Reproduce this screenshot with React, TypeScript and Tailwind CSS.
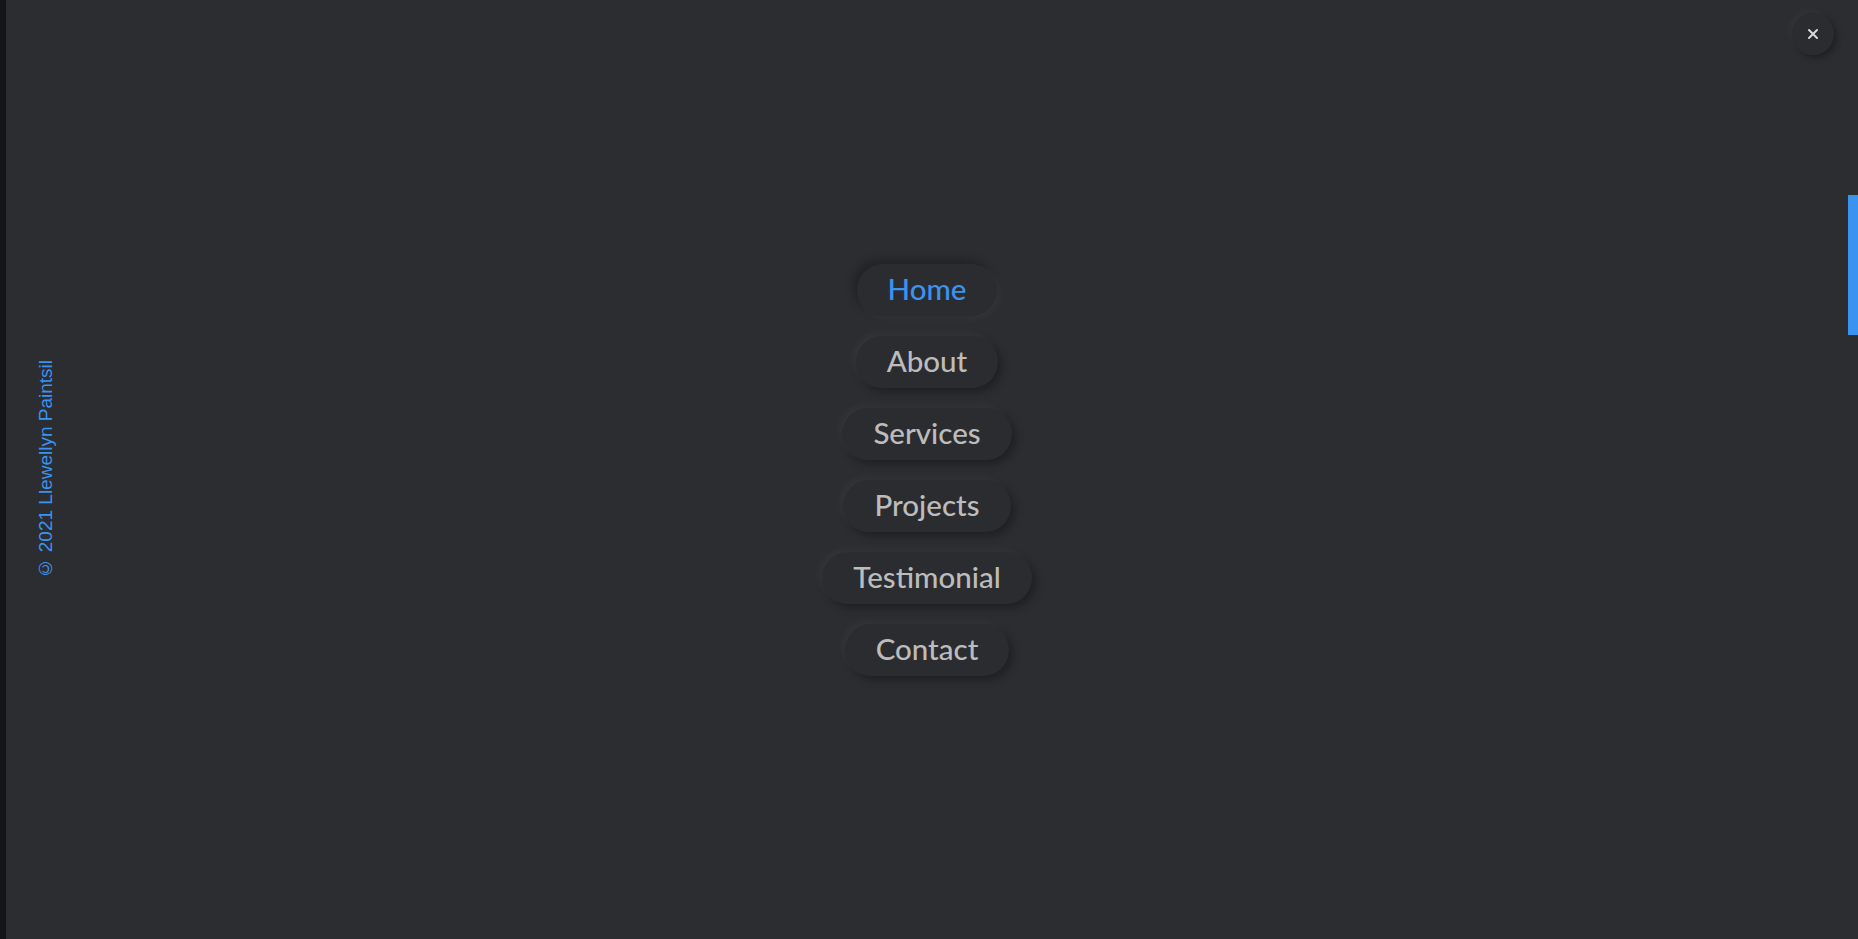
import { X } from "lucide-react";

const links = ["Home", "About", "Services", "Projects", "Testimonial", "Contact"];

export default function App() {
  const active = "Home";

  return (
    <div className="relative h-screen w-full overflow-hidden bg-[#2c2d31] grid grid-cols-[1fr_auto_1fr] font-['Lato',sans-serif]">
      {/* left rail + copyright */}
      <div className="flex h-full">
        <div className="w-[6px] h-full bg-[#141518]" />
        <div className="w-[80px] h-full flex items-center justify-center">
          <span className="[writing-mode:vertical-rl] rotate-180 text-[19px] text-[#3b93f0] font-['Liberation_Sans',Arial,sans-serif] whitespace-nowrap">
            © 2021 Llewellyn Paintsil
          </span>
        </div>
      </div>

      {/* menu */}
      <nav className="flex flex-col items-center justify-center gap-[20px] pr-[4px]">
        {links.map((l) => (
          <a
            key={l}
            href="#"
            className={
              l === active
                ? "h-[52px] px-[31px] flex items-center rounded-full bg-[#2b2c30] text-[29.5px] font-medium text-[#3b93f0] shadow-[-4px_-4px_8px_rgba(0,0,0,0.25),3px_3px_6px_rgba(255,255,255,0.04)]"
                : "h-[52px] px-[31px] flex items-center rounded-full bg-[#2b2c30] text-[29.5px] font-medium text-[#bcbcbc] shadow-[-3px_-3px_6px_rgba(255,255,255,0.045),4px_4px_8px_rgba(0,0,0,0.3)]"
            }
          >
            {l}
          </a>
        ))}
      </nav>

      <div />

      {/* close */}
      <button className="absolute top-[13px] right-[24px] w-[42px] h-[42px] rounded-full bg-[#2b2c30] flex items-center justify-center text-[#d8d8d8] shadow-[-3px_-3px_6px_rgba(255,255,255,0.035),3px_3px_6px_rgba(0,0,0,0.3)]">
        <X className="w-[16px] h-[16px]" strokeWidth={3} />
      </button>

      {/* scroll indicator */}
      <div className="absolute right-0 top-[195px] w-[10px] h-[140px] bg-[#3b93f0]" />
    </div>
  );
}
